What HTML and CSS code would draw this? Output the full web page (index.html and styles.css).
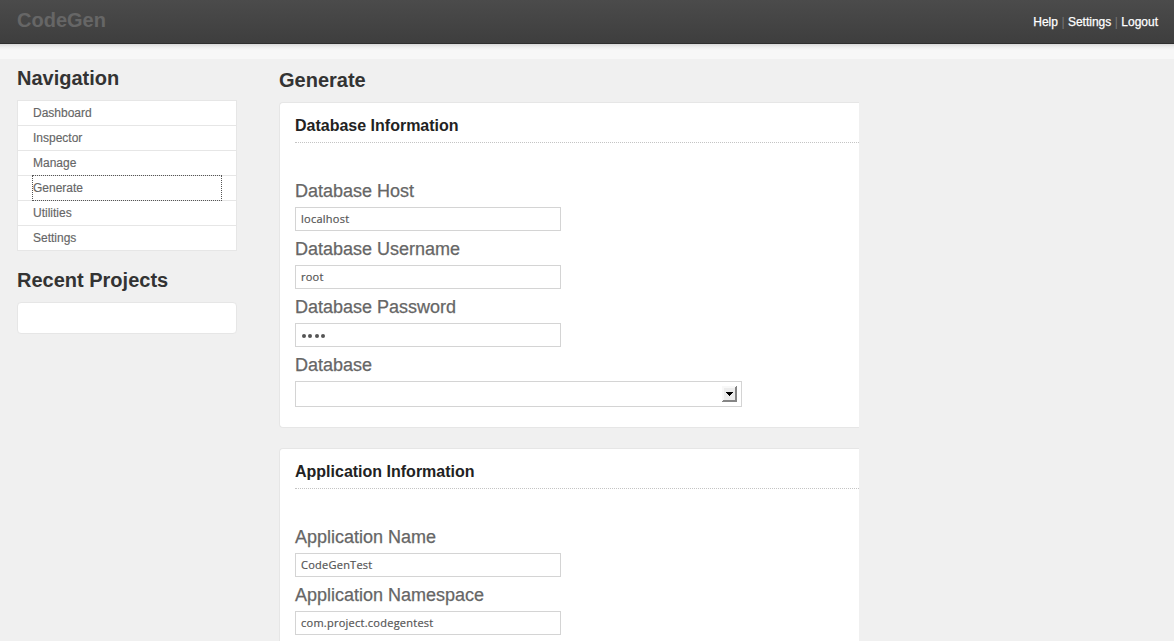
FILE: index.html
```html
<!DOCTYPE html>
<html lang="en">
<head>
<meta charset="utf-8">
<title>CodeGen</title>
<link rel="stylesheet" href="styles.css">
</head>
<body>
<header class="topbar">
  <div class="logo">CodeGen</div>
  <nav class="user-links"><a>Help</a><i>|</i><a>Settings</a><i>|</i><a>Logout</a></nav>
</header>
<div class="strip"></div>
<div class="layout">
  <aside class="sidebar">
    <h2>Navigation</h2>
    <ul class="menu">
      <li><a>Dashboard</a></li>
      <li><a>Inspector</a></li>
      <li><a>Manage</a></li>
      <li><a class="focused">Generate</a></li>
      <li><a>Utilities</a></li>
      <li><a>Settings</a></li>
    </ul>
    <h2 class="recent">Recent Projects</h2>
    <div class="projects"></div>
  </aside>
  <main class="content">
    <h2>Generate</h2>
    <section class="card">
      <h3>Database Information</h3>
      <label>Database Host</label>
      <div class="field"><span>localhost</span></div>
      <label>Database Username</label>
      <div class="field"><span>root</span></div>
      <label>Database Password</label>
      <div class="field dots"><b></b><b></b><b></b><b></b></div>
      <label>Database</label>
      <div class="select">
        <svg width="15" height="16" viewBox="0 0 15 16" shape-rendering="crispEdges">
          <rect width="15" height="16" fill="#f8f8f8"/>
          <rect x="2" y="2" width="11" height="12" fill="#ececec"/>
          <path d="M15 0V16H0V15H1V14H13V1H14V0Z" fill="#858585"/>
          <path d="M4 6H11V7H10V8H9V9H8V10H7V9H6V8H5V7H4Z" fill="#000"/>
        </svg>
      </div>
    </section>
    <section class="card last">
      <h3>Application Information</h3>
      <label>Application Name</label>
      <div class="field"><span>CodeGenTest</span></div>
      <label>Application Namespace</label>
      <div class="field"><span>com.project.codegentest</span></div>
    </section>
  </main>
</div>
</body>
</html>
```
FILE: styles.css
```css
* { box-sizing: border-box; }
html, body { height: 100%; overflow: hidden; }
body { margin: 0; background: #f0f0f0; color: #666; font: 12px "Liberation Sans", Arial, sans-serif; }
h2, h3, ul { margin: 0; padding: 0; }
h2 { color: #333; font-size: 20px; line-height: 24px; }

.topbar {
  display: flex;
  justify-content: space-between;
  height: 44px;
  padding: 0 16px 0 17px;
  background: linear-gradient(#4b4b4b, #3e3e3e);
  border-bottom: 1px solid #2e2e2e;
}
.logo { color: #666; font-size: 20px; font-weight: bold; line-height: 40px; }
.user-links { display: flex; color: #fff; line-height: 44px; -webkit-text-stroke: 0.25px #fff; }
.user-links i { width: 10px; color: #777; font-style: normal; text-align: center; -webkit-text-stroke: 0; }
.strip { height: 15px; background: linear-gradient(#d9d9d9, #eee 3px, #f7f7f7 6px, #f7f7f7); }

.layout { display: flex; gap: 42px; padding-left: 17px; }
.sidebar { width: 220px; padding-top: 7px; }
.menu { margin-top: 10px; background: #fff; border: 1px solid #e6e6e6; list-style: none; }
.menu li { height: 25px; padding: 0 14px; border-bottom: 1px solid #e6e6e6; }
.menu li:last-child { height: 24px; border-bottom: 0; }
.menu a { display: block; height: 24px; padding-left: 1px; line-height: 24px; -webkit-text-stroke: 0.15px #666; }
.menu .focused { height: 26px; margin-top: -1px; padding-left: 0; border: 1px dotted #555; }
.menu li:has(.focused) { display: flow-root; }
.recent { margin-top: 17px; }
.projects { height: 32px; margin-top: 10px; background: #fff; border: 1px solid #e6e6e6; border-radius: 4px; }

.content { width: 580px; padding-top: 9px; }
.card {
  height: 326px;
  margin: 10px 0 20px;
  padding: 0 0 0 15px;
  background: #fff;
  border: 1px solid #e6e6e6;
  border-right: 0;
  border-radius: 4px 0 0 4px;
}
.last { height: 193px; margin-bottom: 0; border-bottom: 0; border-radius: 4px 0 0 0; }
.card h3 { height: 40px; margin-bottom: 30px; border-bottom: 1px dotted #c4c4c4; color: #222; font-size: 16px; line-height: 45px; }
.card label { display: block; height: 34px; font-size: 18px; line-height: 37px; -webkit-text-stroke: 0.25px #666; }
.field { display: flex; width: 266px; height: 24px; padding-left: 5px; border: 1px solid #d4d4d4; color: #555; font: 11px/22px "Open Sans", "Noto Sans", sans-serif; letter-spacing: 0.25px; -webkit-text-stroke: 0.2px #555; }
.dots { align-items: center; gap: 2.3px; padding: 1px 0 0 6px; }
.dots b { width: 4px; height: 4px; border-radius: 50%; background: #555; }
.select { display: flex; justify-content: flex-end; align-items: center; width: 447px; height: 26px; padding-right: 4px; border: 1px solid #d4d4d4; }
```
